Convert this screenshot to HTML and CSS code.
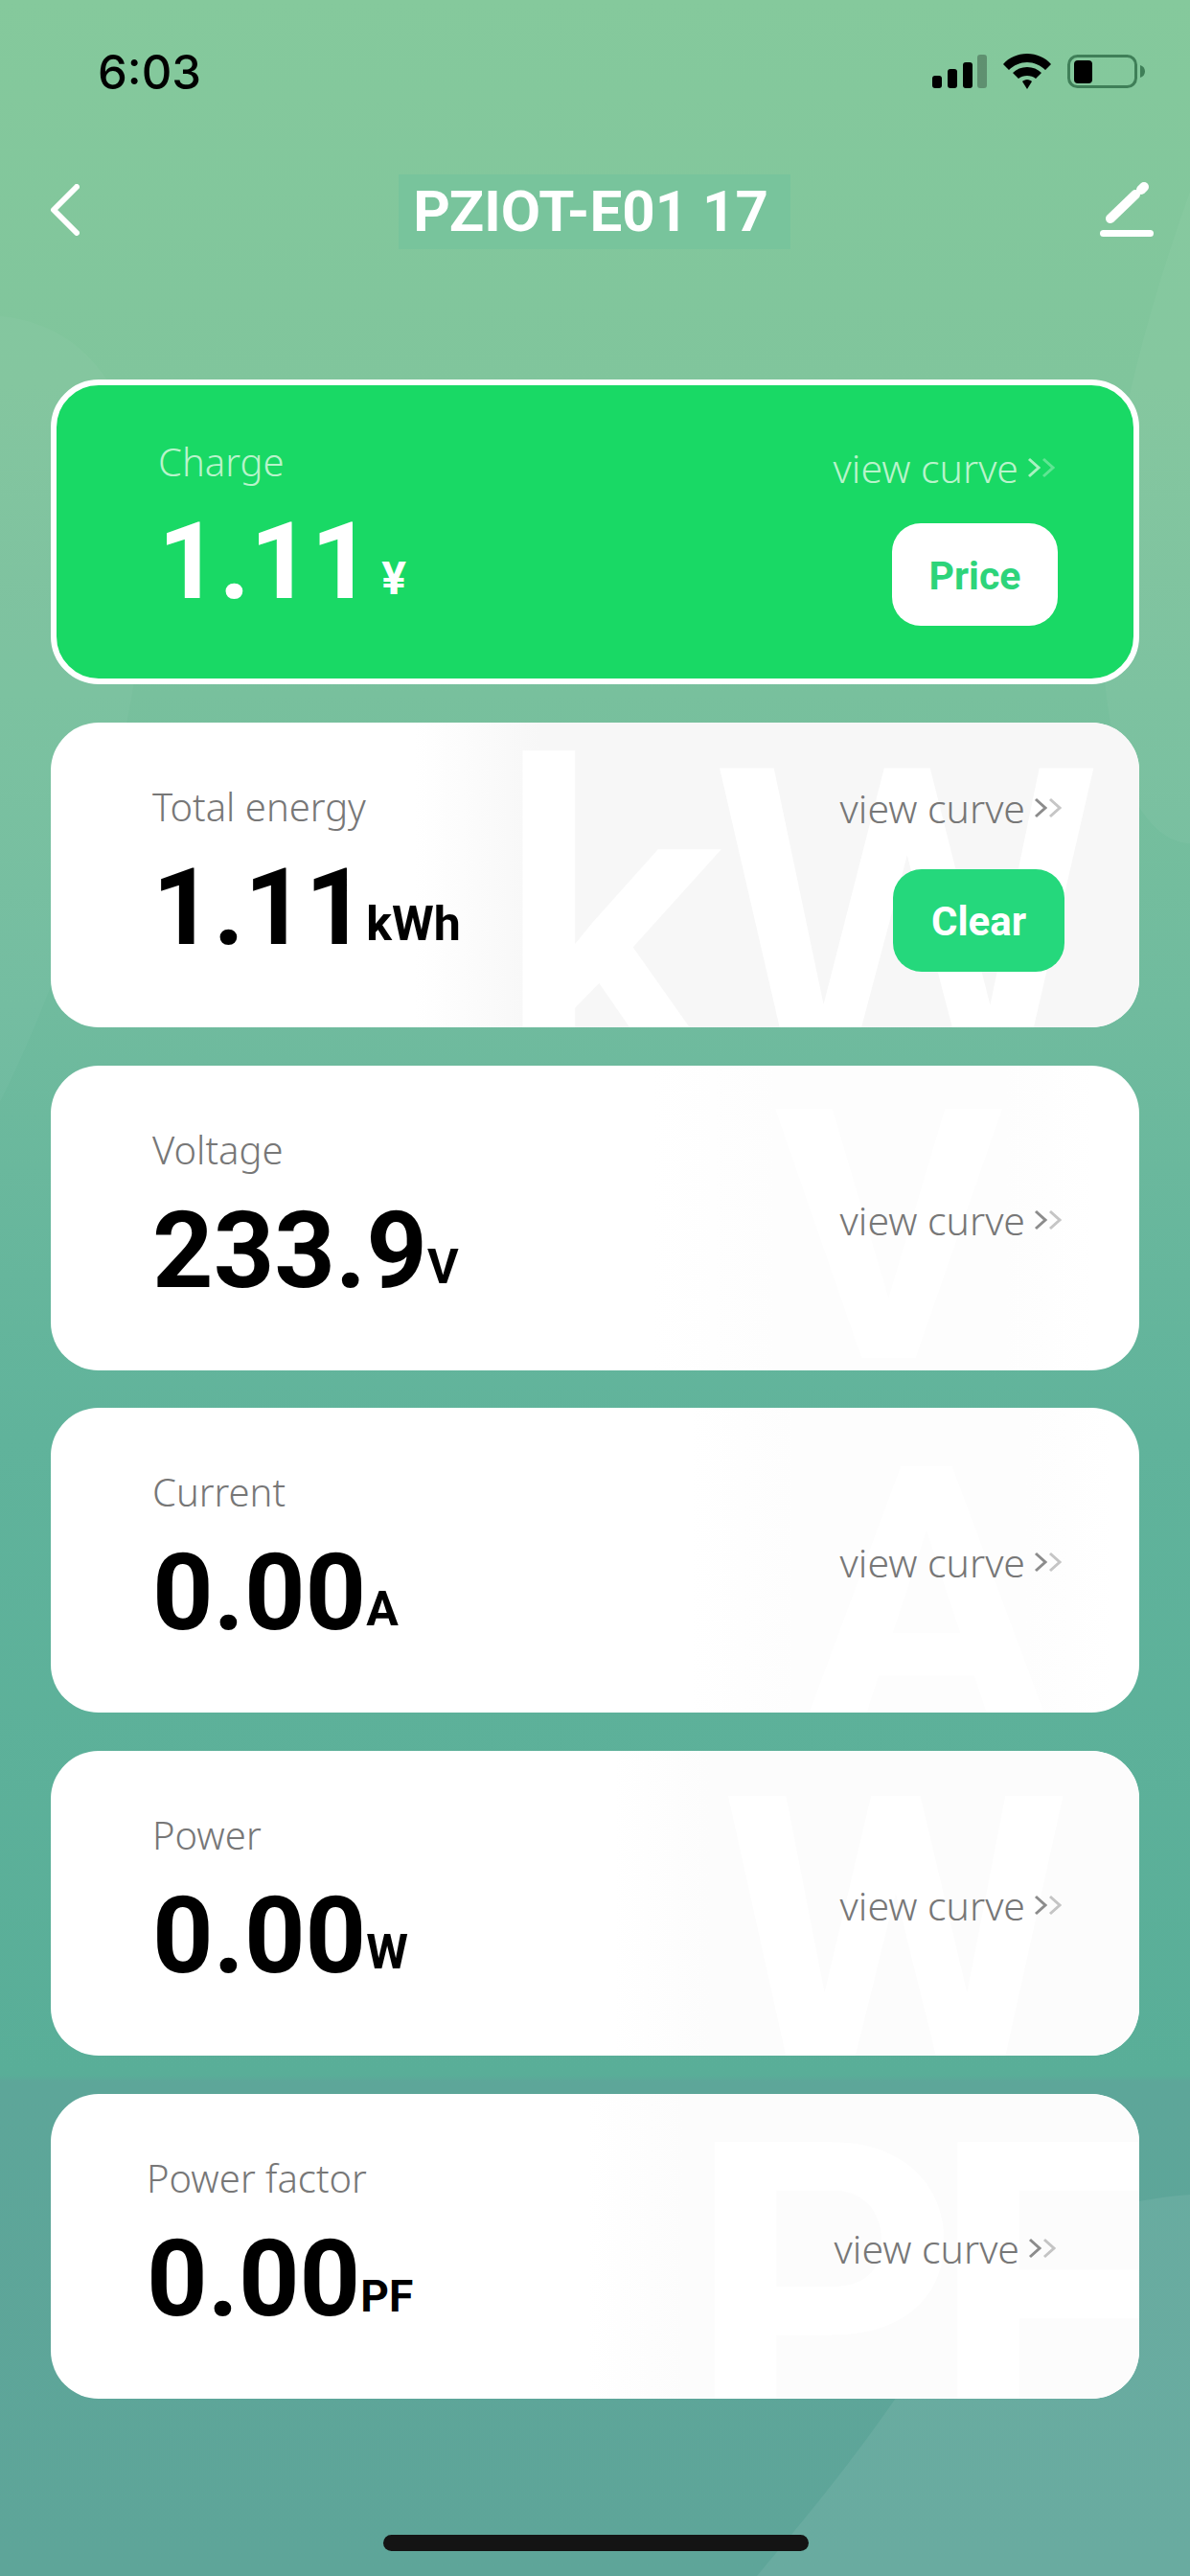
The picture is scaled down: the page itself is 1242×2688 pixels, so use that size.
FILE: index.html
```html
<!DOCTYPE html>
<html lang="en">
<head>
<meta charset="utf-8">
<title>PZIOT-E01 17</title>
<link rel="stylesheet" href="styles.css">
</head>
<body>
<svg class="bg-shapes" viewBox="0 0 1242 2688" aria-hidden="true">
  <path class="shape-a" d="M0 330C120 340 170 470 150 640C130 820 70 1010 0 1150Z"/>
  <path class="shape-b" d="M1242 200C1170 400 1130 600 1160 760C1180 860 1220 880 1242 880Z"/>
  <path class="shape-c" d="M1242 2290C1120 2300 1040 2340 950 2480C890 2570 830 2640 790 2688H1242Z"/>
</svg>
<main class="screen">
  <header class="status">
    <span class="time">6:03</span>
    <span class="status-icons">
      <svg class="signal" viewBox="0 0 57 35"><rect x="0" y="22" width="10" height="13" rx="3"/><rect x="16" y="15" width="10" height="20" rx="3"/><rect x="32" y="8" width="10" height="27" rx="3"/><rect class="dim" x="47" y="0" width="10" height="35" rx="3"/></svg>
      <svg class="wifi" viewBox="0 0 50 37"><path d="M25 0C35 0 44 4 50 11L44 17C39 12 32 9 25 9C18 9 11 12 6 17L0 11C6 4 15 0 25 0Z"/><path d="M25 14C31 14 36 16 40 20L34 26C32 24 28 23 25 23C22 23 18 24 16 26L10 20C14 16 19 14 25 14Z"/><path d="M25 27C27 27 29 28 30 29L25 37L20 29C21 28 23 27 25 27Z"/></svg>
      <svg class="battery" viewBox="0 0 81 35"><rect class="batt-case" x="1.5" y="1.5" width="70" height="32" rx="9"/><rect x="7" y="6" width="19" height="24" rx="4"/><path class="batt-tip" d="M76 11C79 12 81 14 81 17.500C81 21 79 23 76 24Z"/></svg>
    </span>
  </header>

  <nav class="topbar">
    <svg class="back" viewBox="0 0 31 54"><path d="M28 3L4 27L28 51"/></svg>
    <h1 class="title">PZIOT-E01 17</h1>
    <svg class="edit" viewBox="0 0 56 57"><path class="edit-pen" d="M11 38L37 13"/><path class="edit-tip" d="M43 8L46 5"/><rect class="edit-line" x="0" y="50" width="56" height="7" rx="3.500"/></svg>
  </nav>

  <div class="cards">
    <section class="card card-charge">
      <div class="reading">
        <div class="label">Charge</div>
        <div class="value"><span class="num">1.11</span><span class="unit unit-yen">¥</span></div>
      </div>
      <div class="side side-button">
        <div class="curve">view curve<svg class="chev" viewBox="0 0 30 22"><path class="c1" d="M2 2L12 11L2 20"/><path class="c2" d="M17 2L27 11L17 20"/></svg></div>
        <div class="btn btn-price">Price</div>
      </div>
    </section>

    <section class="card">
      <span class="mark mark-kw">kW</span>
      <div class="reading">
        <div class="label">Total energy</div>
        <div class="value"><span class="num">1.11</span><span class="unit">kWh</span></div>
      </div>
      <div class="side side-button">
        <div class="curve">view curve<svg class="chev" viewBox="0 0 30 22"><path class="c1" d="M2 2L12 11L2 20"/><path class="c2" d="M17 2L27 11L17 20"/></svg></div>
        <div class="btn btn-clear">Clear</div>
      </div>
    </section>

    <section class="card">
      <span class="mark mark-v">V</span>
      <div class="reading">
        <div class="label">Voltage</div>
        <div class="value"><span class="num">233.9</span><span class="unit">V</span></div>
      </div>
      <div class="side">
        <div class="curve">view curve<svg class="chev" viewBox="0 0 30 22"><path class="c1" d="M2 2L12 11L2 20"/><path class="c2" d="M17 2L27 11L17 20"/></svg></div>
      </div>
    </section>

    <section class="card">
      <span class="mark mark-a">A</span>
      <div class="reading">
        <div class="label">Current</div>
        <div class="value"><span class="num">0.00</span><span class="unit">A</span></div>
      </div>
      <div class="side">
        <div class="curve">view curve<svg class="chev" viewBox="0 0 30 22"><path class="c1" d="M2 2L12 11L2 20"/><path class="c2" d="M17 2L27 11L17 20"/></svg></div>
      </div>
    </section>

    <section class="card">
      <span class="mark mark-w">W</span>
      <div class="reading">
        <div class="label">Power</div>
        <div class="value"><span class="num">0.00</span><span class="unit">W</span></div>
      </div>
      <div class="side">
        <div class="curve">view curve<svg class="chev" viewBox="0 0 30 22"><path class="c1" d="M2 2L12 11L2 20"/><path class="c2" d="M17 2L27 11L17 20"/></svg></div>
      </div>
    </section>

    <section class="card card-pf">
      <span class="mark mark-pf">PF</span>
      <div class="reading">
        <div class="label">Power factor</div>
        <div class="value"><span class="num">0.00</span><span class="unit">PF</span></div>
      </div>
      <div class="side">
        <div class="curve">view curve<svg class="chev" viewBox="0 0 30 22"><path class="c1" d="M2 2L12 11L2 20"/><path class="c2" d="M17 2L27 11L17 20"/></svg></div>
      </div>
    </section>
  </div>

  <div class="home-bar"></div>
</main>
</body>
</html>
```

FILE: styles.css
```css
* { box-sizing: border-box; }
html, body { margin: 0; padding: 0; }
body {
  width: 1242px;
  height: 2688px;
  overflow: hidden;
  position: relative;
  font-family: "Noto Sans", sans-serif;
  background: linear-gradient(180deg, #85c99c 0, #80c59c 400px, #70bb9e 1050px, #60b39b 1500px, #59ae98 2165px, #5da699 2172px, #5ea599 2688px);
}
.bg-shapes { position: absolute; left: 0; top: 0; width: 1242px; height: 2688px; }
.shape-a { fill: #ffffff; opacity: .03; }
.shape-b { fill: #ffffff; opacity: .04; }
.shape-c { fill: #ffffff; opacity: .07; }
.screen { position: relative; display: flex; flex-direction: column; height: 2688px; }

.status { height: 182px; padding: 48px 47px 0 102px; display: flex; justify-content: space-between; align-items: flex-start; }
.time { font-family: "Inter", sans-serif; font-size: 49px; line-height: 56px; font-weight: 500; color: #000; }
.status-icons { display: flex; align-items: flex-start; padding-top: 9px; }
.signal { width: 57px; height: 35px; }
.signal .dim { fill: #000; opacity: .28; }
.wifi { width: 50px; height: 37px; margin-left: 17px; margin-top: -1px; }
.battery { width: 81px; height: 35px; margin-left: 17px; }
.batt-case { fill: none; stroke: #3f7f58; stroke-width: 3; }
.batt-tip { fill: #3f7f58; }

.topbar { height: 214px; padding: 0 38px 0 52px; display: flex; justify-content: space-between; align-items: flex-start; }
.back { width: 31px; height: 54px; margin-top: 10px; }
.back path { fill: none; stroke: #fff; stroke-width: 6; stroke-linecap: round; stroke-linejoin: round; }
.title { margin: 0 0 0 10px; padding-right: 8px; height: 78px; width: 409px; background: #78c49c; color: #fff; font: 700 60px/78px "Roboto", sans-serif; text-align: center; }
.edit { width: 56px; height: 57px; margin-top: 8px; }
.edit-pen, .edit-tip { fill: none; stroke: #fff; stroke-width: 10; stroke-linecap: round; }
.edit-line { fill: #fff; }

.cards { padding: 0 53px; display: flex; flex-direction: column; gap: 39.75px; }
.card { position: relative; overflow: hidden; height: 318px; border-radius: 50px; background: #fff; display: flex; justify-content: space-between; padding: 0 78px 0 106px; }
.card-charge { background: #19d965; border: 6px solid #fff; padding: 0 79px 0 106px; }
.card-pf { padding: 0 84px 0 100px; }

.reading { position: relative; padding-top: 62px; }
.label { font-size: 40px; line-height: 52px; font-weight: 300; color: #777; }
.value { display: flex; align-items: baseline; margin-top: 14px; color: #000; }
.num { font: 700 111px/130px "Roboto", sans-serif; }
.unit { font: 700 50px/48px "Roboto", sans-serif; margin-left: 0; position: relative; top: -4px; }
.card-pf .unit { font-size: 46px; }
.card-charge .label { color: #b9f4cb; }
.card-charge .num { color: #fff; }
.card-charge .unit { color: #fff; }
.card-charge .reading { padding-top: 54px; }
.card-charge .value { margin-top: 13px; }
.unit-yen { margin-left: 10px; font-size: 48px; }

.side { position: relative; display: flex; flex-direction: column; justify-content: center; align-items: flex-end; padding-top: 4px; }
.side-button { justify-content: flex-start; padding-top: 63px; }
.card-charge .side-button { padding-top: 60px; }
.curve { display: flex; align-items: center; font-size: 41px; line-height: 52px; font-weight: 300; color: #777; }
.chev { width: 30px; height: 22px; margin-left: 9px; margin-right: 2px; }
.chev path { fill: none; stroke: #808080; stroke-width: 3; }
.chev .c1 { opacity: .9; }
.chev .c2 { opacity: .45; }
.card-charge .curve { color: #b9f4cb; }
.card-charge .chev path { stroke: #b9f4cb; }

.btn { width: 179px; height: 107px; border-radius: 30px; display: flex; align-items: center; justify-content: center; padding-top: 3px; font: 700 42px/1 "Roboto", sans-serif; margin-top: 38px; }
.btn-clear { background: #25d87c; color: #fff; }
.btn-price { background: #fff; color: #2dd47a; width: 173px; margin-top: 32px; font-size: 41px; }

.mark { position: absolute; top: 0; bottom: 0; overflow: hidden; white-space: nowrap; font-family: "Roboto", sans-serif; font-weight: 700; color: #fff; pointer-events: none; }
.mark-kw { left: 380px; right: 0; padding-left: 84px; font-size: 465px; font-weight: 500; line-height: 440px; letter-spacing: -19px; background: linear-gradient(90deg, rgba(247,247,247,0), #f7f7f7 130px); }
.mark-v { left: 627px; width: 460px; padding-left: 128px; font-size: 366px; line-height: 360px; background: linear-gradient(90deg, rgba(253,253,253,0), #fdfdfd 130px, #fdfdfd 370px, rgba(253,253,253,0)); }
.mark-a { left: 667px; width: 440px; padding-left: 116px; font-size: 390px; line-height: 410px; background: linear-gradient(90deg, rgba(253,253,253,0), #fdfdfd 110px, #fdfdfd 350px, rgba(253,253,253,0)); }
.mark-w { left: 587px; right: 0; padding-left: 113px; font-size: 415px; line-height: 401px; background: linear-gradient(90deg, rgba(252,252,252,0), #fcfcfc 100px); }
.mark-pf { left: 560px; right: 0; padding-left: 105px; font-size: 440px; line-height: 426px; letter-spacing: -30px; background: linear-gradient(90deg, rgba(252,252,252,0), #fcfcfc 100px); }

.home-bar { position: absolute; left: 400px; top: 2645px; width: 444px; height: 17px; border-radius: 9px; background: #141414; }
```
